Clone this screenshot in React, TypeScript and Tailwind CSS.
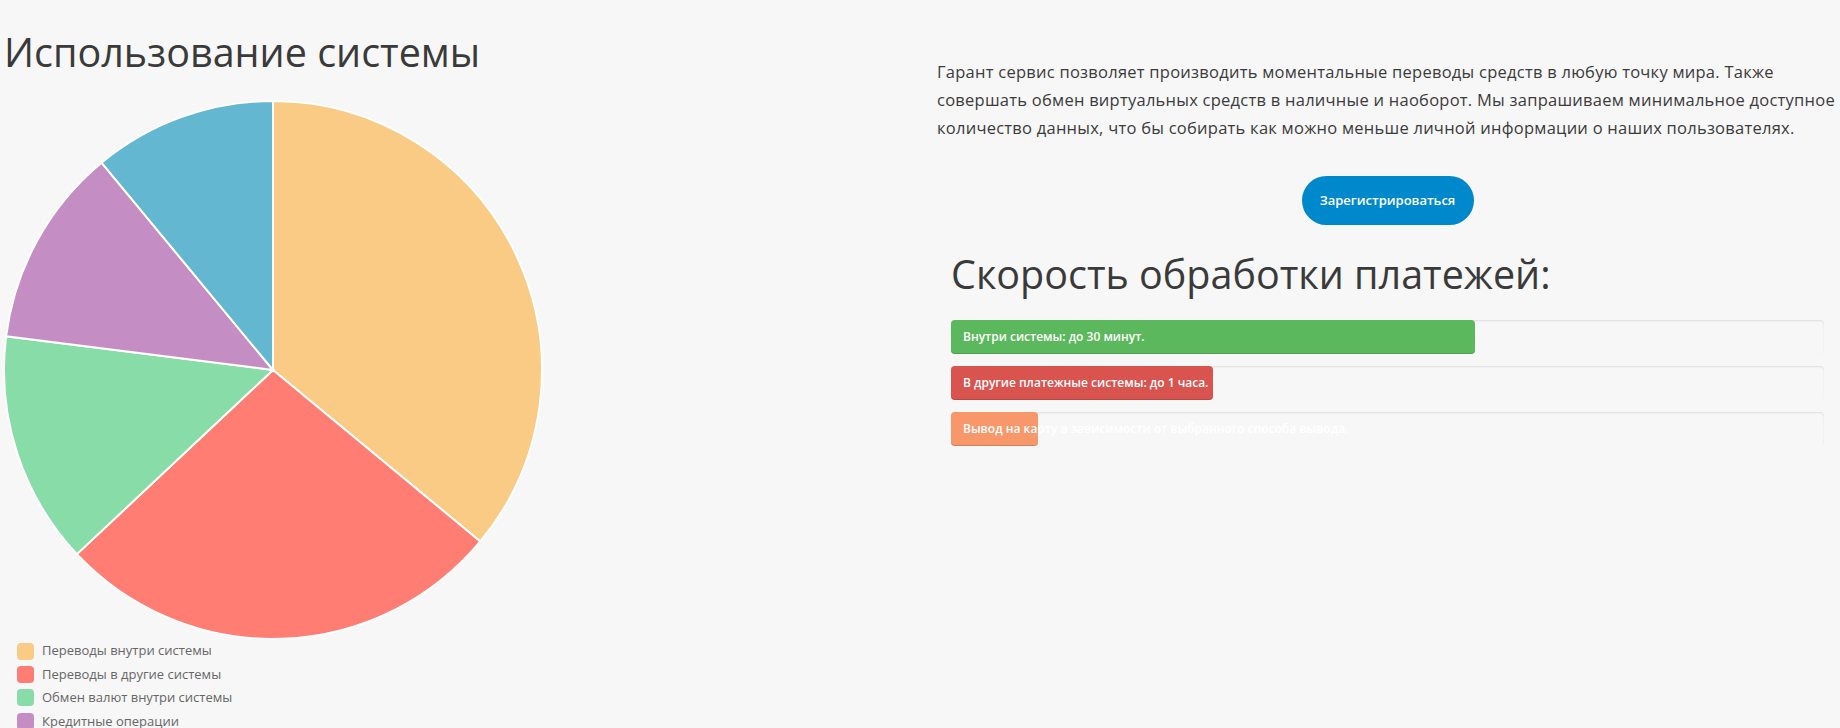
import React from 'react';

const slices = [
  { label: 'Переводы внутри системы', value: 36, color: '#f9cb84' },
  { label: 'Переводы в другие системы', value: 27, color: '#ff7d73' },
  { label: 'Обмен валют внутри системы', value: 14, color: '#88dca8' },
  { label: 'Кредитные операции', value: 12, color: '#c48ec4' },
  { label: 'Прочее', value: 11, color: '#64b7d0' },
];

const PieChart: React.FC = () => {
  const cx = 272;
  const cy = 271;
  const r = 269;
  const total = slices.reduce((s, x) => s + x.value, 0);
  let acc = 0;

  return (
    <svg width="544" height="540" viewBox="0 0 544 540" className="block">
      {slices.map((s) => {
        const a0 = (acc / total) * Math.PI * 2;
        acc += s.value;
        const a1 = (acc / total) * Math.PI * 2;
        const x0 = cx + r * Math.sin(a0);
        const y0 = cy - r * Math.cos(a0);
        const x1 = cx + r * Math.sin(a1);
        const y1 = cy - r * Math.cos(a1);
        const large = a1 - a0 > Math.PI ? 1 : 0;
        return (
          <path
            key={s.label}
            d={`M${cx} ${cy} L${x0} ${y0} A${r} ${r} 0 ${large} 1 ${x1} ${y1} Z`}
            fill={s.color}
            stroke="#fff"
            strokeWidth={2}
          />
        );
      })}
    </svg>
  );
};

const bars = [
  { text: 'Внутри системы: до 30 минут.', width: '60%', color: 'bg-[#5cb85c]' },
  { text: 'В другие платежные системы: до 1 часа.', width: '30%', color: 'bg-[#d9534f]' },
  { text: 'Вывод на карту в зависимости от выбранного способа вывода.', width: '10%', color: 'bg-[#f7976a]' },
];

const App: React.FC = () => {
  return (
    <div className="min-h-screen bg-[#f7f7f7] flex font-['Open_Sans','Noto_Sans',sans-serif] text-[#333]">
      {/* left: usage chart */}
      <div className="w-[920px] shrink-0">
        <h1 className="pl-[4px] pt-[31px] text-[39.5px] leading-[1.1] font-normal text-[#3a3a3a]">
          Использование системы
        </h1>
        <div className="mt-[25px] pl-[1px]">
          <PieChart />
        </div>
        <ul className="pl-[17px] flex flex-col">
          {slices.slice(0, 4).map((s) => (
            <li key={s.label} className="flex items-center gap-[8px] h-[23.4px]">
              <span className="w-[17px] h-[17px] rounded-[4px]" style={{ backgroundColor: s.color }} />
              <span className="text-[13px] text-[#666]">{s.label}</span>
            </li>
          ))}
        </ul>
      </div>

      {/* right: description + speeds */}
      <div className="flex-1 pl-[17px] pr-[2px]">
        <p className="mt-[58px] text-[16.5px] tracking-[0.25px] leading-[28px] text-[#3b3b3b]">
          Гарант сервис позволяет производить моментальные переводы средств в любую точку мира. Также
          совершать обмен виртуальных средств в наличные и наоборот. Мы запрашиваем минимальное доступное
          количество данных, что бы собирать как можно меньше личной информации о наших пользователях.
        </p>

        <div className="mt-[34px] flex justify-center">
          <button className="h-[49px] w-[172px] rounded-full bg-[#0088cc] text-white text-[13px] font-semibold">
            Зарегистрироваться
          </button>
        </div>

        <div className="pl-[14px] pr-[14px]">
          <h2 className="mt-[28px] text-[39.5px] leading-[1.1] font-normal text-[#3a3a3a]">
            Скорость обработки платежей:
          </h2>
          <div className="mt-[24px] flex flex-col gap-[12px]">
            {bars.map((b) => (
              <div
                key={b.text}
                className="h-[34px] rounded-[4px] bg-[#f7f7f7] shadow-[inset_0_1px_2px_rgba(0,0,0,0.1)]"
              >
                <div
                  className={`h-full rounded-[4px] ${b.color} flex items-center pl-[12px] whitespace-nowrap overflow-visible text-white text-[12px] font-semibold shadow-[inset_0_-1px_0_rgba(0,0,0,0.15)]`}
                  style={{ width: b.width }}
                >
                  {b.text}
                </div>
              </div>
            ))}
          </div>
        </div>
      </div>
    </div>
  );
};

export default App;
